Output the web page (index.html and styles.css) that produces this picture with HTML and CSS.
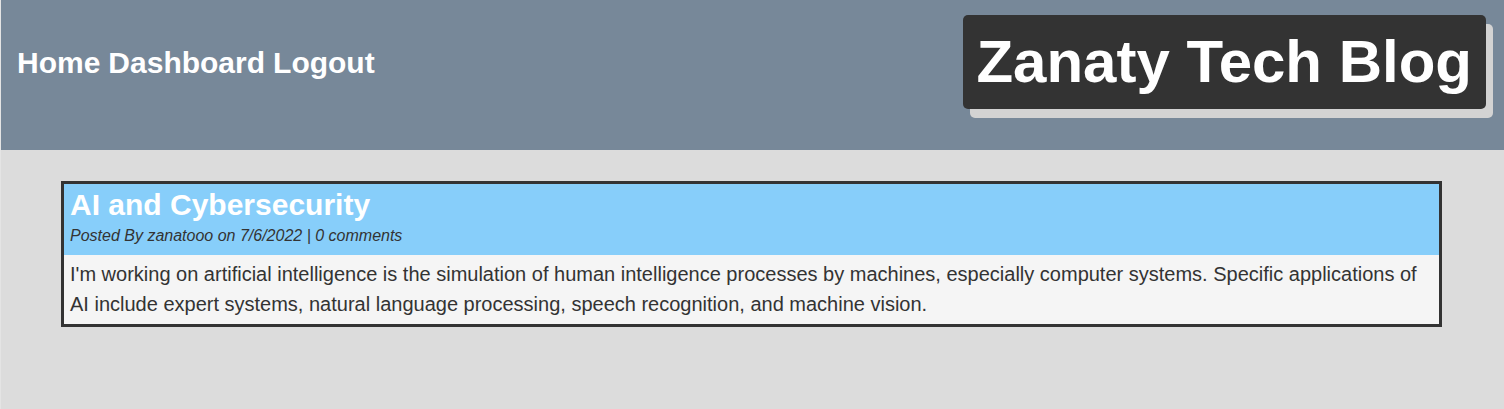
FILE: index.html
```html
<!DOCTYPE html>
<html lang="en">
<head>
<meta charset="utf-8">
<title>Zanaty Tech Blog</title>
<link rel="stylesheet" href="styles.css">
</head>
<body>
<header class="site-header">
  <nav class="nav">
    <a href="#" class="nav-link">Home</a>
    <a href="#" class="nav-link">Dashboard</a>
    <a href="#" class="nav-link">Logout</a>
  </nav>
  <h1 class="logo">Zanaty Tech Blog</h1>
</header>
<main class="main">
  <article class="post">
    <div class="post-head">
      <h2 class="post-title">AI and Cybersecurity</h2>
      <p class="post-meta">Posted By zanatooo on 7/6/2022 | 0 comments</p>
    </div>
    <div class="post-body">
      <p>I'm working on artificial intelligence is the simulation of human intelligence processes by machines, especially computer systems. Specific applications of AI include expert systems, natural language processing, speech recognition, and machine vision.</p>
    </div>
  </article>
</main>
</body>
</html>
```

FILE: styles.css
```css
* { box-sizing: border-box; }
html, body { margin: 0; padding: 0; }
body {
  font-family: "Liberation Sans", Arial, Helvetica, sans-serif;
  background: #dcdcdc;
  color: #333;
  min-height: 409px;
  border-left: 1px solid #e4e4e4;
}
.site-header {
  height: 150px;
  background: #778899;
  display: flex;
  align-items: flex-start;
  justify-content: space-between;
  padding: 15px 18px 0 16px;
}
.nav {
  display: flex;
  gap: 8px;
  margin-top: 31px;
}
.nav-link {
  color: #fff;
  text-decoration: none;
  font-weight: bold;
  font-size: 30px;
}
.logo {
  margin: 0;
  background: #333;
  color: #fff;
  font-size: 60px;
  font-weight: bold;
  line-height: 60px;
  padding: 17px 14px 17px 13px;
  border-radius: 5px;
  box-shadow: 7px 9px 0 #d3d3d3;
}
.main {
  padding: 31px 62px 0 60px;
}
.post {
  border: 3px solid #333;
}
.post-head {
  background: #87cefa;
  padding: 3px 6px 10px 6px;
}
.post-title {
  margin: 0;
  color: #fff;
  font-size: 30px;
  font-weight: bold;
  line-height: 36px;
}
.post-meta {
  margin: 3px 0 0 0;
  font-size: 16px;
  line-height: 19px;
  font-style: italic;
  color: #333;
}
.post-body {
  background: #f5f5f5;
  padding: 4px 6px 5px 6px;
}
.post-body p {
  margin: 0;
  font-size: 20px;
  line-height: 30px;
  color: #333;
}
```
